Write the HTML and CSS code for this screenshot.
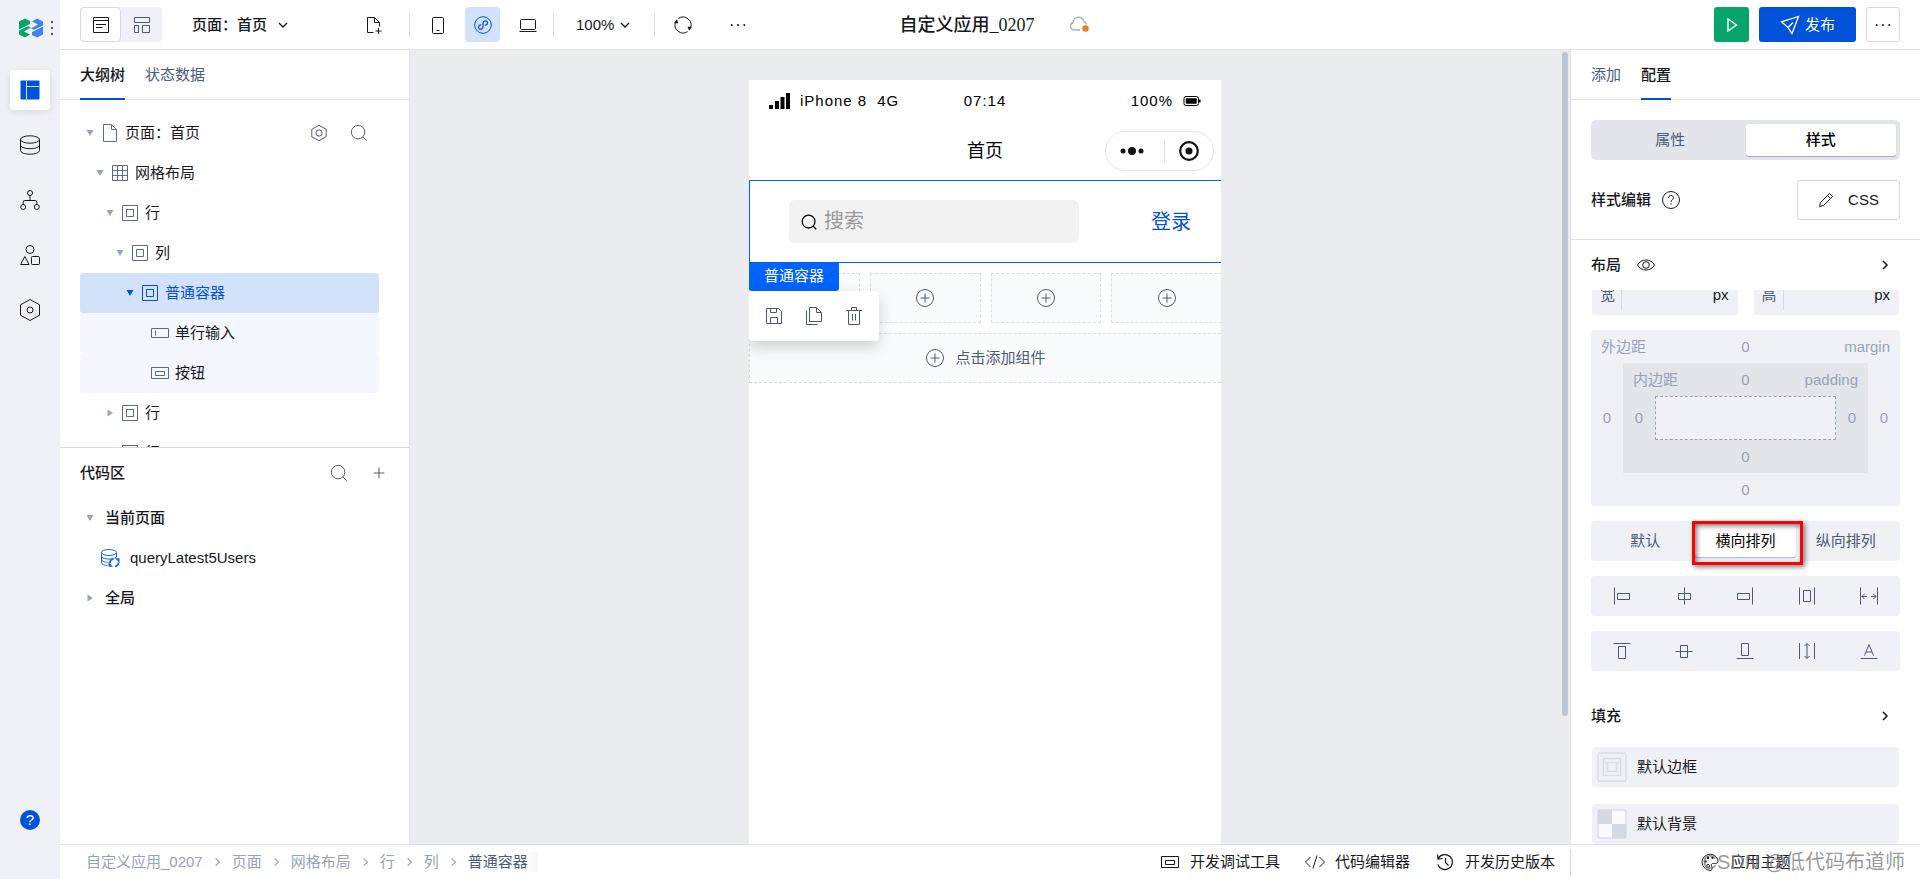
FILE: index.html
```html
<!DOCTYPE html>
<html lang="zh-CN">
<head>
<meta charset="utf-8">
<meta name="viewport" content="width=device-width, initial-scale=1">
<title>自定义应用_0207</title>
<link rel="stylesheet" href="styles.css">
</head>
<body>
<svg class="sprite" aria-hidden="true">
  <symbol id="i-caret" viewBox="0 0 8 8"><path d="M.5 1h7L4 7z" fill="currentColor" stroke="none"/></symbol>
  <symbol id="i-caret-right" viewBox="0 0 8 8"><path d="M1.500.5v7L7 4z" fill="currentColor" stroke="none"/></symbol>
  <symbol id="i-chev-down" viewBox="0 0 10 10"><path d="M1 3l4 4 4-4"/></symbol>
  <symbol id="i-chev-right" viewBox="0 0 10 10"><path d="M3 1l4 4-4 4"/></symbol>
  <symbol id="i-file" viewBox="0 0 20 20"><path d="M3.500 1.500h8l5 5v12h-13zM11.500 1.500v5h5"/></symbol>
  <symbol id="i-grid" viewBox="0 0 20 20"><path d="M2.500 2.500h15v15h-15zM7.500 2.500v15M12.500 2.500v15M2.500 7.500h15M2.500 12.500h15"/></symbol>
  <symbol id="i-box" viewBox="0 0 20 20"><path d="M2.500 2.500h15v15h-15zM6.500 6.500h7v7h-7z"/></symbol>
  <symbol id="i-input" viewBox="0 0 20 20"><path d="M1.500 5.500h17v9h-17zM5.500 7.500v5"/></symbol>
  <symbol id="i-button" viewBox="0 0 20 20"><path d="M1.500 4.500h17v11h-17zM5.500 8.500h9v4h-9z"/></symbol>
  <symbol id="i-hex" viewBox="0 0 20 20"><path d="M10 1.500l8 4.300v8.400l-8 4.300-8-4.300V5.800z"/><circle cx="10" cy="10" r="3.500"/></symbol>
  <symbol id="i-search" viewBox="0 0 20 20"><circle cx="9" cy="9" r="7.500"/><path d="M14.500 14.500l4.200 4.200"/></symbol>
  <symbol id="i-plus" viewBox="0 0 20 20"><path d="M10 4v12M4 10h12"/></symbol>
  <symbol id="i-plus-circle" viewBox="0 0 20 20"><circle cx="10" cy="10" r="8.500"/><path d="M10 5.500v9M5.500 10h9"/></symbol>
  <symbol id="i-dots" viewBox="0 0 20 20"><g fill="currentColor" stroke="none"><circle cx="3" cy="10" r="1.100"/><circle cx="10" cy="10" r="1.100"/><circle cx="17" cy="10" r="1.100"/></g></symbol>
</svg>

<div class="app">
  <nav class="rail" aria-label="主导航">
    <div class="brand">
      <svg class="logo" viewBox="0 0 24 20" aria-hidden="true">
        <path d="M0 3.500L6 .5l5 2.500v3L0 11.500zM0 12.500L9 8.300l3 1.200-7 4 6 3L6 19.500 0 16.500z" fill="#07a56c"/>
        <path d="M24 16.500L18 19.500l-5-2.500v-3L24 8.500zM24 7.500L15 11.700l-3-1.200 7-4-6-3L18 .5l6 3z" fill="#3f83f2"/>
      </svg>
      <svg class="brand-dots" viewBox="0 0 4 16" aria-hidden="true"><circle cx="2" cy="2" r="1.200"/><circle cx="2" cy="8" r="1.200"/><circle cx="2" cy="14" r="1.200"/></svg>
    </div>
    <button class="rail-btn active" aria-label="页面设计"><svg class="ic20" viewBox="0 0 20 20" aria-hidden="true"><g fill="#0052d9" stroke="none"><rect x=".5" y=".5" width="19" height="19" rx="1"/></g><path d="M6.500.5v19M6.500 6.500h13" stroke="#cfe0fb"/></svg></button>
    <button class="rail-btn" aria-label="数据源"><svg class="ic20" viewBox="0 0 20 20" aria-hidden="true"><ellipse cx="10" cy="4.500" rx="9.500" ry="3.700"/><path d="M.5 4.500v11c0 2 4.200 3.700 9.500 3.700s9.500-1.700 9.500-3.700v-11M.5 10c0 2 4.200 3.700 9.500 3.700s9.500-1.700 9.500-3.700"/></svg></button>
    <button class="rail-btn" aria-label="流程"><svg class="ic20" viewBox="0 0 20 20" aria-hidden="true"><circle cx="10" cy="3" r="2.500"/><circle cx="3.200" cy="17" r="2.500"/><circle cx="16.800" cy="17" r="2.500"/><path d="M10 5.500v5M3.200 14.500v-2.500q0-1.500 1.500-1.500h10.600q1.500 0 1.500 1.500v2.500"/></svg></button>
    <button class="rail-btn" aria-label="组件"><svg class="ic20" viewBox="0 0 20 20" aria-hidden="true"><circle cx="10" cy="4.500" r="4"/><path d="M4.800 11.500l4.200 8H.6z" stroke-linejoin="round"/><rect x="11.500" y="11.500" width="8" height="8" rx="1"/></svg></button>
    <button class="rail-btn" aria-label="设置"><svg class="ic22" viewBox="0 0 22 22" aria-hidden="true"><path d="M11 .5l9.500 5.300v10.400L11 21.500 1.500 16.200V5.800z"/><circle cx="11" cy="11" r="3"/></svg></button>
    <button class="rail-btn help" aria-label="帮助"><span class="help-dot">?</span></button>
  </nav>

  <div class="work">
    <header class="topbar">
      <div class="top-left">
        <div class="toggle">
          <button class="on" aria-label="大纲视图"><svg class="ic18" viewBox="0 0 18 18" aria-hidden="true"><path d="M1.500 1.500h15v15h-15zM1.500 4.500h15M4 8.500h10M4 11.500h6.500"/></svg></button>
          <button aria-label="布局视图"><svg class="ic18" viewBox="0 0 18 18" aria-hidden="true"><path d="M1.500 1.500h15v5h-15zM1.500 9.500h4v7h-4zM9.500 9.500h7v7h-7z"/></svg></button>
        </div>
        <label class="pick page-pick"><select aria-label="当前页面"><option>页面：首页</option></select><svg class="ic10" aria-hidden="true"><use href="#i-chev-down"/></svg></label>
        <button class="tool new-page" aria-label="新建页面"><svg class="ic18" viewBox="0 0 18 18" aria-hidden="true"><path d="M8.500 16.500h-6v-15h7l5 5v4M9.500 1.500v5h5M13.500 12v6M10.500 15h6"/></svg></button>
        <span class="divider"></span>
        <div class="devices">
          <button class="tool" aria-label="手机"><svg class="ic18" viewBox="0 0 18 18" aria-hidden="true"><rect x="3.500" y="1.500" width="11" height="16" rx="1"/><path d="M7.500 14.500h3"/></svg></button>
          <button class="tool active" aria-label="小程序"><svg class="ic18" viewBox="0 0 18 18" aria-hidden="true"><circle cx="9" cy="9" r="8.300"/><path d="M7.200 8.800C3.600 9 4 13.200 6.500 13.200 8.200 13.200 9 12 9 10.700V7.300C9 6 9.800 4.800 11.500 4.800c2.500 0 2.900 4.200-.7 4.400" stroke-width="1.200"/></svg></button>
          <button class="tool" aria-label="电脑"><svg class="ic18" viewBox="0 0 18 18" aria-hidden="true"><rect x="1.500" y="3.500" width="15" height="10" rx="1"/><path d="M.5 15.500h17"/></svg></button>
        </div>
        <span class="divider tight"></span>
        <label class="pick zoom-pick"><select aria-label="缩放"><option>100%</option></select><svg class="ic10" aria-hidden="true"><use href="#i-chev-down"/></svg></label>
        <span class="divider"></span>
        <div class="actions">
          <button class="tool" aria-label="刷新"><svg class="ic20" viewBox="0 0 20 20" aria-hidden="true"><path d="M5.500 3.400a8 8 0 0 1 11.900 9.600M14.500 16.600a8 8 0 0 1-11.900-9.600"/><path d="M1 8.300l2.800-4 1.700 4zM19 11.700l-2.800 4-1.700-4z" fill="currentColor" stroke="none"/></svg></button>
          <button class="tool" aria-label="更多"><svg class="ic18" aria-hidden="true"><use href="#i-dots"/></svg></button>
        </div>
      </div>
      <div class="app-title">
        <h1>自定义应用_0207</h1>
        <svg class="ic20" viewBox="0 0 20 20" aria-label="未保存"><path d="M11 15H4.500a4 4 0 0 1-.6-7.500 5.600 5.600 0 0 1 11-1 4.300 4.300 0 0 1 2.600 3" stroke="#a3afc4" stroke-width="1.400"/><circle cx="16.500" cy="13.500" r="3.200" fill="#ed7b2f" stroke="none"/></svg>
      </div>
      <div class="top-right">
        <button class="run" aria-label="预览"><svg class="ic18" viewBox="0 0 18 18" aria-hidden="true"><path d="M5 3l8.500 6L5 15z" stroke-width="1.400"/></svg></button>
        <button class="publish"><svg class="ic20" viewBox="0 0 20 20" aria-hidden="true"><path d="M18.500 1.500L12 18.500l-4-6-6.500-5.700zM8 12.500l5-5" stroke-width="1.300"/></svg>发布</button>
        <button class="more" aria-label="更多操作"><svg class="ic18" aria-hidden="true"><use href="#i-dots"/></svg></button>
      </div>
    </header>

    <div class="middle">
      <aside class="left">
        <div class="tabs"><button class="tab on">大纲树</button><button class="tab">状态数据</button></div>
        <div class="tree">
          <div class="row d0"><svg class="caret"><use href="#i-caret"/></svg><svg class="ic20"><use href="#i-file"/></svg><span>页面：首页</span>
            <div class="row-tools"><button class="tool" aria-label="页面设置"><svg class="ic18"><use href="#i-hex"/></svg></button><button class="tool" aria-label="搜索"><svg class="ic18"><use href="#i-search"/></svg></button></div></div>
          <div class="row d1"><svg class="caret"><use href="#i-caret"/></svg><svg class="ic20"><use href="#i-grid"/></svg><span>网格布局</span></div>
          <div class="row d2"><svg class="caret"><use href="#i-caret"/></svg><svg class="ic20"><use href="#i-box"/></svg><span>行</span></div>
          <div class="row d3"><svg class="caret"><use href="#i-caret"/></svg><svg class="ic20"><use href="#i-box"/></svg><span>列</span></div>
          <div class="row d4 selected"><svg class="caret"><use href="#i-caret"/></svg><svg class="ic20"><use href="#i-box"/></svg><span>普通容器</span></div>
          <div class="row d5 inside"><i class="caret"></i><svg class="ic20"><use href="#i-input"/></svg><span>单行输入</span></div>
          <div class="row d5 inside"><i class="caret"></i><svg class="ic20"><use href="#i-button"/></svg><span>按钮</span></div>
          <div class="row d2"><svg class="caret"><use href="#i-caret-right"/></svg><svg class="ic20"><use href="#i-box"/></svg><span>行</span></div>
          <div class="row d2"><svg class="caret"><use href="#i-caret-right"/></svg><svg class="ic20"><use href="#i-box"/></svg><span>行</span></div>
        </div>
        <section class="code">
          <div class="code-head"><h2>代码区</h2><div class="row-tools"><button class="tool" aria-label="搜索代码"><svg class="ic18"><use href="#i-search"/></svg></button><button class="tool" aria-label="新建"><svg class="ic18"><use href="#i-plus"/></svg></button></div></div>
          <div class="row d0 group"><svg class="caret"><use href="#i-caret"/></svg><span>当前页面</span></div>
          <div class="row d0 query"><svg class="ic20" viewBox="0 0 20 20"><ellipse cx="9" cy="4.500" rx="7.500" ry="3"/><path d="M1.500 4.500v10c0 1.600 2.500 2.800 6 3M16.500 4.500v5M1.500 8c0 1.600 3.300 3 7.500 3s7.500-1.400 7.500-3M1.500 11.500c0 1.600 3 2.700 6 2.900"/><path d="M10 15a3.800 3.800 0 0 1 3.500-3.800M18.500 14.500a3.800 3.800 0 0 1-3.500 3.800" stroke-width="1.800"/><path d="M8.500 18.800V14l4.500 4.800zM19.500 10.200V15L15 10.200z" fill="currentColor" stroke="none"/></svg><span>queryLatest5Users</span></div>
          <div class="row d0 group"><svg class="caret"><use href="#i-caret-right"/></svg><span>全局</span></div>
        </section>
      </aside>

      <main class="canvas">
        <div class="stage">
          <div class="phone">
            <div class="status">
              <div class="carrier"><svg class="signal" viewBox="0 0 21 16"><path d="M0 12h4v4H0zM6 8h4v8H6zM11.500 4h4v12h-4zM17 0h4v16h-4z"/></svg><span>iPhone 8</span><span>4G</span></div>
              <span>07:14</span>
              <div class="battery"><span>100%</span><svg class="ic18" viewBox="0 0 18 18"><rect x="1" y="4.500" width="14.500" height="9" rx="2" stroke="#000"/><rect x="2.800" y="6.300" width="11" height="5.500" rx="1" fill="#000" stroke="none"/><path d="M16.800 7.500v3" stroke="#000" stroke-width="1.500"/></svg></div>
            </div>
            <div class="navbar">
              <span class="nav-title">首页</span>
              <div class="capsule">
                <svg class="cap-dots" viewBox="0 0 24 10"><circle cx="3" cy="5" r="2.500"/><circle cx="12" cy="5" r="4"/><circle cx="21" cy="5" r="2.500"/></svg>
                <i></i>
                <svg class="ic20" viewBox="0 0 20 20"><circle cx="10" cy="10" r="8.800" stroke="#111" stroke-width="2.200"/><circle cx="10" cy="10" r="3.500" fill="#111" stroke="none"/></svg>
              </div>
            </div>
            <div class="picked">
              <label class="search"><svg class="ic16" viewBox="0 0 20 20"><circle cx="9.500" cy="9.500" r="8" stroke-width="1.600"/><path d="M15 15l4 4" stroke-width="1.600"/></svg><input type="text" placeholder="搜索" aria-label="搜索"></label>
              <button class="login">登录</button>
              <div class="pick-tools">
                <span class="pick-name">普通容器</span>
                <div class="pick-menu">
                  <button aria-label="保存"><svg class="ic18" viewBox="0 0 18 18"><path d="M1.500 1.500h12l3 3v12h-15zM5.500 1.500v4h6v-4M5.500 16.500v-6h7v6"/></svg></button>
                  <button aria-label="复制"><svg class="ic18" viewBox="0 0 18 18"><path d="M4.500.5h7l5 5v9h-12zM11.500.5v5h5M1.500 3.500v14h11"/></svg></button>
                  <button aria-label="删除"><svg class="ic18" viewBox="0 0 18 18"><path d="M1 3.500h16M6.500 3.500v-3h5v3M3.500 3.500v14h11v-14M7.500 7v6.500M10.500 7v6.500"/></svg></button>
                </div>
              </div>
            </div>
            <div class="cells">
              <div class="slot"><svg class="ic20"><use href="#i-plus-circle"/></svg></div>
              <div class="slot"><svg class="ic20"><use href="#i-plus-circle"/></svg></div>
              <div class="slot"><svg class="ic20"><use href="#i-plus-circle"/></svg></div>
              <div class="slot"><svg class="ic20"><use href="#i-plus-circle"/></svg></div>
            </div>
            <div class="slot wide"><svg class="ic20"><use href="#i-plus-circle"/></svg><span>点击添加组件</span></div>
          </div>
        </div>
        <div class="scrollbar"><i></i></div>
      </main>

      <aside class="right">
        <div class="tabs"><button class="tab">添加</button><button class="tab on">配置</button></div>
        <div class="style-top">
          <div class="segment main-seg"><button>属性</button><button class="on">样式</button></div>
          <div class="style-edit"><h2>样式编辑</h2><svg class="ic20" viewBox="0 0 20 20" aria-label="帮助"><circle cx="10" cy="10" r="8.500"/><path d="M7.500 8c0-3.400 5-3.200 5-.3 0 2-2.500 2-2.500 4.300M10 13.300v1.400"/></svg>
            <button class="css-btn"><svg class="ic16" viewBox="0 0 16 16" aria-hidden="true"><path d="M1.500 14.500l1-4 9-9 3 3-9 9zM9.500 3.500l3 3"/></svg>CSS</button></div>
        </div>
        <div class="section-head"><h2>布局</h2><svg class="ic20" viewBox="0 0 20 20" aria-label="显示"><path d="M1.500 10c3.500-6.700 13.500-6.700 17 0-3.500 6.700-13.500 6.700-17 0z"/><circle cx="10" cy="10" r="3.300"/></svg><svg class="ic10 go"><use href="#i-chev-right"/></svg></div>
        <div class="props">
          <div class="size-row">
            <label class="size"><span>宽</span><input type="text" aria-label="宽"><em>px</em></label>
            <label class="size"><span>高</span><input type="text" aria-label="高"><em>px</em></label>
          </div>
          <div class="margin-box">
            <div class="edge"><span>外边距</span><b>0</b><span>margin</span></div>
            <div class="mid"><b>0</b>
              <div class="padding-box">
                <div class="edge"><span>内边距</span><b>0</b><span>padding</span></div>
                <div class="mid"><b>0</b><div class="content-box"></div><b>0</b></div>
                <div class="edge single"><b>0</b></div>
              </div>
            <b>0</b></div>
            <div class="edge single"><b>0</b></div>
          </div>
          <div class="segment flow"><button>默认</button><button class="on">横向排列</button><button>纵向排列</button><i class="mark"></i></div>
          <div class="icons">
            <button aria-label="左对齐"><svg class="ic18" viewBox="0 0 18 18"><path d="M1.500.5v17M4.500 6.500h12v6h-12z"/></svg></button>
            <button aria-label="水平居中"><svg class="ic18" viewBox="0 0 18 18"><path d="M9.500.5v17M3.500 6.500h12v6h-12z"/></svg></button>
            <button aria-label="右对齐"><svg class="ic18" viewBox="0 0 18 18"><path d="M16.500.5v17M1.500 6.500h12v6h-12z"/></svg></button>
            <button aria-label="环绕分布"><svg class="ic18" viewBox="0 0 18 18"><path d="M1.500.5v17M16.500.5v17M5.500 3.500h7v11h-7z"/></svg></button>
            <button aria-label="两端对齐"><svg class="ic18" viewBox="0 0 18 18"><path d="M.5.5v17M17.500.5v17M2 9.500h5M4.500 7L2 9.500 4.500 12M16 9.500h-5M13.500 7L16 9.500 13.500 12"/></svg></button>
          </div>
          <div class="icons">
            <button aria-label="顶部对齐"><svg class="ic18" viewBox="0 0 18 18"><path d="M.5 1.500h17M5.500 4.500h7v12h-7z"/></svg></button>
            <button aria-label="垂直居中"><svg class="ic18" viewBox="0 0 18 18"><path d="M.5 9.500h17M5.500 3.500h7v12h-7z"/></svg></button>
            <button aria-label="底部对齐"><svg class="ic18" viewBox="0 0 18 18"><path d="M.5 16.500h17M5.500 1.500h7v12h-7z"/></svg></button>
            <button aria-label="拉伸"><svg class="ic18" viewBox="0 0 18 18"><path d="M1.500 1v16M16.500 1v16M9 1.500v15M6.500 4L9 1.500 11.500 4M6.500 14L9 16.500 11.500 14"/></svg></button>
            <button aria-label="基线对齐"><svg class="ic18" viewBox="0 0 18 18"><path d="M.5 16.500h17M4.500 13.500L9 2.500l4.500 11M6 10h6"/></svg></button>
          </div>
          <div class="section-head fill"><h2>填充</h2><svg class="ic10 go"><use href="#i-chev-right"/></svg></div>
          <div class="presets">
            <button class="preset"><svg class="thumb" viewBox="0 0 30 30"><rect x="1" y="1" width="28" height="28" rx="2"/><path d="M6.500 6.500h17v17h-17zM10.500 10.500h9v9h-9z"/></svg>默认边框</button>
            <button class="preset"><svg class="thumb" viewBox="0 0 30 30"><rect x="1" y="1" width="28" height="28" rx="2" fill="#f8fafd"/><path d="M1 1h14v14H1zM15 15h14v14H15z" fill="#d5d9e2" stroke="none"/></svg>默认背景</button>
          </div>
        </div>
      </aside>
    </div>

    <footer class="footbar">
      <nav class="crumbs" aria-label="路径">
        <a href="#">自定义应用_0207</a><svg class="ic10"><use href="#i-chev-right"/></svg><a href="#">页面</a><svg class="ic10"><use href="#i-chev-right"/></svg><a href="#">网格布局</a><svg class="ic10"><use href="#i-chev-right"/></svg><a href="#">行</a><svg class="ic10"><use href="#i-chev-right"/></svg><a href="#">列</a><svg class="ic10"><use href="#i-chev-right"/></svg><a href="#" class="here">普通容器</a>
      </nav>
      <div class="dev-tools">
        <button><svg class="ic20"><use href="#i-button"/></svg>开发调试工具</button>
        <button><svg class="ic20" viewBox="0 0 20 20"><path d="M5.500 5l-5 5 5 5M14.500 5l5 5-5 5M12 3.500L8 16.500"/></svg>代码编辑器</button>
        <button><svg class="ic20" viewBox="0 0 20 20"><path d="M3.300 6.500a7.500 7.500 0 1 1-.5 6M2.500 2.500l.5 4.500 4.500-.5M10.500 6v4.500l3 3" stroke-width="1.200"/></svg>开发历史版本</button>
      </div>
      <div class="theme">
        <button><svg class="ic20" viewBox="0 0 20 20"><path d="M10 18.500C3 17 .5 11 3 6.500 6.500.5 15 1 17.500 7c1.200 3.500-.5 5-3 4.500-3-.5-4 1-2.500 3.500 1 2-.5 3.700-2 3.500z"/><g fill="currentColor" stroke="none"><circle cx="5.500" cy="9.500" r="1.200"/><circle cx="8" cy="5.800" r="1.200"/><circle cx="12.500" cy="5.800" r="1.200"/></g><circle cx="8" cy="14" r="1.500"/></svg>应用主题</button>
        <span class="credit">CSDN @低代码布道师</span>
      </div>
    </footer>
  </div>
</div>
</body>
</html>
```
FILE: styles.css
```css
:root {
  --ink: #16181d;
  --slate: #4b5b76;
  --mute: #97a3b7;
  --line: #e1e3e8;
  --soft: #f0f1f6;
  --blue: #0052d9;
}
* { box-sizing: border-box; }
body {
  margin: 0;
  color: var(--ink);
  background: #fff;
  font: 15px/20px "Liberation Sans", "Noto Sans CJK SC", sans-serif;
}
button, input, select { font: inherit; color: inherit; margin: 0; padding: 0; border: 0; background: none; }
button { display: flex; align-items: center; justify-content: center; cursor: pointer; white-space: nowrap; }
h1, h2 { margin: 0; font-size: 15px; font-weight: 500; }
a { color: inherit; text-decoration: none; }
svg { flex: none; fill: none; stroke: currentColor; }
.sprite { position: absolute; width: 0; height: 0; }
.ic10 { width: 10px; height: 10px; stroke-width: 1.300; }
.ic16 { width: 16px; height: 16px; }
.ic18 { width: 18px; height: 18px; }
.ic20 { width: 20px; height: 20px; }
.ic22 { width: 22px; height: 22px; }

.app { display: flex; height: 100vh; overflow: hidden; }
.work { flex: 1; min-width: 0; display: flex; flex-direction: column; }

/* Rail */
.rail { flex: 0 0 60px; display: flex; flex-direction: column; align-items: center; gap: 15px; padding-bottom: 39px; background: var(--soft); }
.brand { display: flex; align-items: center; gap: 7px; height: 55px; padding-left: 12px; }
.logo { width: 24px; height: 20px; stroke: none; }
.brand-dots { width: 4px; height: 16px; fill: var(--slate); stroke: none; }
.rail-btn { width: 40px; height: 40px; border-radius: 4px; }
.rail-btn.active { background: #fff; box-shadow: 0 2px 6px rgba(30, 50, 90, .12); }
.rail-btn.help { margin-top: auto; }
.help-dot { width: 20px; border-radius: 50%; background: var(--blue); color: #fff; text-align: center; }

/* Top bar */
.topbar { flex: 0 0 50px; display: grid; grid-template-columns: 1fr auto 1fr; align-items: center; padding: 0 20px; border-bottom: 1px solid var(--line); }
.top-left, .devices, .actions, .top-right { display: flex; align-items: center; }
.toggle { display: flex; height: 35px; border-radius: 4px; background: var(--soft); color: var(--slate); }
.toggle button { width: 41px; height: 35px; border-radius: 4px; }
.toggle .on { border: 1px solid #d5d9e2; background: #fff; color: var(--ink); }
.pick { display: flex; align-items: center; gap: 10px; }
.pick select { appearance: none; }
.page-pick { margin-left: 30px; font-weight: 500; }
.tool { width: 35px; height: 35px; border-radius: 4px; }
.tool.active { background: #d3e2fb; color: var(--blue); }
.new-page { margin-left: 68px; }
.divider { width: 1px; height: 24px; margin: 0 10px 0 18px; background: var(--line); }
.divider.tight { margin: 0 22px 0 8px; }
.devices { gap: 10px; }
.zoom-pick { gap: 5px; margin-right: 6px; }
.actions { gap: 20px; }
.app-title { display: flex; align-items: center; gap: 34px; padding-left: 8px; }
.app-title h1 { font: 500 18px/24px "Liberation Serif", "Noto Sans CJK SC", serif; }
.top-right { justify-content: flex-end; gap: 10px; }
.top-right button { height: 35px; border-radius: 3px; }
.run { width: 35px; background: #07a56c; color: #fff; }
.publish { width: 97px; gap: 5px; background: var(--blue); color: #fff; }
.top-right .more { width: 34px; border: 1px solid #d5d9e2; }

.middle { flex: 1; min-height: 0; display: flex; }
.tabs { flex: 0 0 50px; display: flex; gap: 20px; padding: 0 20px; border-bottom: 1px solid var(--line); }
.tab { height: 50px; margin-bottom: -1px; border-top: 2px solid transparent; border-bottom: 2px solid transparent; color: var(--slate); }
.tab.on { border-bottom-color: var(--blue); color: var(--ink); font-weight: 500; }

/* Outline and code */
.left { flex: 0 0 350px; min-width: 0; display: flex; flex-direction: column; border-right: 1px solid var(--line); }
.tree { flex: 7 1 0; min-height: 0; overflow: hidden; padding: 0 30px 0 20px; border-bottom: 1px solid #d5d9e2; }
.tree .row:first-child { margin-top: 13px; }
.row { display: flex; align-items: center; height: 40px; border-radius: 3px; }
.row > svg:not(.caret) { color: #5c6b87; }
.row > span { margin-left: 5px; }
.caret { width: 20px; height: 8px; color: var(--mute); }
.d1 { padding-left: 10px; }
.d2 { padding-left: 20px; }
.d3 { padding-left: 30px; }
.d4 { padding-left: 40px; }
.d5 { padding-left: 50px; }
.row.selected, .row.selected > svg:not(.caret), .row.selected > .caret { color: var(--blue); }
.row.selected { background: #d3e2fb; }
.row.inside { background: #f4f7fe; }
.row-tools { display: flex; gap: 5px; margin-left: auto; color: #444b57; }
.tree .row-tools { padding-right: 3px; }
.code { flex: 8 1 0; min-height: 0; overflow: hidden; padding: 0 13px 0 20px; }
.code-head { display: flex; align-items: center; height: 50px; }
.group { font-weight: 500; }
.row.query { padding-left: 20px; }
.row.query > svg { color: #1766e8; }
.row.query > span { margin-left: 10px; }

/* Canvas */
.canvas { flex: 1; min-width: 0; display: flex; background: #ebecf0; }
.stage { flex: 1; min-width: 0; display: flex; justify-content: center; padding-top: 30px; }
.phone { width: 472px; overflow: hidden; background: #fff; color: #000; }
.scrollbar { flex: 0 0 10px; padding: 2px 0; }
.scrollbar i { display: block; width: 6px; height: 84%; margin-left: 2px; border-radius: 3px; background: #bcc5d1; }
.status { display: grid; grid-template-columns: 1fr auto 1fr; align-items: center; height: 42px; padding: 0 20px; letter-spacing: 1px; }
.carrier, .battery { display: flex; align-items: center; gap: 10px; }
.battery { justify-content: flex-end; }
.signal { width: 21px; height: 16px; fill: #000; stroke: none; }
.navbar { display: grid; grid-template-columns: 1fr auto 1fr; align-items: center; height: 58px; padding: 0 7px; }
.nav-title { grid-column: 2; font-size: 18px; line-height: 24px; }
.capsule { justify-self: end; display: flex; align-items: center; justify-content: space-between; width: 109px; height: 40px; padding: 0 14px; border: 1px solid #e4e6ec; border-radius: 20px; }
.capsule i { width: 1px; height: 23px; background: var(--line); margin-left: 5px; }
.cap-dots { width: 24px; height: 10px; fill: #111; stroke: none; }
.picked { position: relative; display: flex; align-items: center; justify-content: space-between; height: 83px; padding: 0 30px 0 39px; border: 1px solid #0062ff; border-right: 0; }
.search { display: flex; align-items: center; gap: 7px; width: 290px; height: 43px; padding: 0 12px; border-radius: 6px; background: #f2f2f2; font-size: 20px; }
.search input { flex: 1; min-width: 0; height: 30px; outline: 0; }
.search input::placeholder { color: #999; opacity: 1; }
.login { font-size: 20px; line-height: 28px; color: var(--blue); }
.pick-tools { position: absolute; z-index: 2; top: 100%; left: -1px; }
.pick-name { display: block; width: 90px; padding: 4px 0 5px; border-radius: 0 0 3px 3px; background: #0062ff; color: #fff; text-align: center; }
.pick-menu { display: flex; align-items: center; height: 50px; padding: 0 5px; border-radius: 3px; background: #fff; color: var(--slate); box-shadow: 0 6px 16px rgba(0, 0, 0, .18); }
.pick-menu button { width: 40px; height: 40px; }
.cells { display: grid; grid-template-columns: repeat(4, 1fr); gap: 10px; margin: 10px -1px 10px 0; }
.slot { display: flex; align-items: center; justify-content: center; gap: 10px; height: 50px; border: 1px dashed #d9dce2; background: #fafbfd; color: var(--slate); }
.slot.wide { border-right: 0; }

/* Config panel */
.right { flex: 0 0 350px; min-width: 0; display: flex; flex-direction: column; border-left: 1px solid var(--line); }
.style-top { display: flex; flex-direction: column; gap: 20px; padding: 20px 20px 19px; border-bottom: 1px solid var(--line); }
.segment { position: relative; display: grid; grid-auto-flow: column; grid-auto-columns: 1fr; height: 40px; border-radius: 4px; color: var(--slate); }
.segment .on { border-radius: 3px; background: #fff; color: #000; box-shadow: 0 1px 1px rgba(75, 91, 118, .4); }
.main-seg { padding: 4px; border-radius: 5px; background: #e2e5ea; }
.main-seg .on { font-weight: 500; }
.style-edit, .section-head { display: flex; align-items: center; gap: 10px; }
.css-btn { width: 103px; height: 40px; gap: 14px; margin-left: auto; border: 1px solid #d5d9e2; border-radius: 3px; }
.section-head { flex: none; height: 50px; gap: 15px; padding: 0 30px 0 20px; }
.go { margin-left: auto; stroke-width: 1.500; }
.props { flex: 1; min-height: 0; overflow: hidden; display: flex; flex-direction: column; gap: 15px; padding: 0 20px; }
.props > * { flex: none; }
.size-row { display: flex; gap: 16px; margin-top: -15px; padding: 0 1px; }
.size { flex: 1; min-width: 0; display: flex; align-items: center; height: 40px; padding: 0 9px 0 8px; border-radius: 3px; background: var(--soft); }
.size span { padding-right: 6px; border-right: 1px solid #d5d9e2; line-height: 30px; color: var(--slate); }
.size input { flex: 1; width: 0; min-width: 0; }
.size em { font-style: normal; }
.margin-box { border-radius: 3px; background: var(--soft); color: var(--mute); }
.margin-box b { flex: none; width: 32px; font-weight: 400; text-align: center; }
.edge { display: grid; grid-template-columns: 1fr auto 1fr; align-items: center; height: 33px; padding: 0 10px; }
.edge span:last-child { text-align: right; }
.edge.single { grid-template-columns: 1fr; justify-items: center; }
.mid { display: flex; align-items: center; }
.padding-box { flex: 1; background: #e2e5ea; }
.content-box { flex: 1; height: 44px; border: 1px dashed var(--mute); background: var(--soft); }
.flow, .icons { background: var(--soft); }
.flow { padding: 4px; }
.mark { position: absolute; inset: 0 97px -4px 101px; border: 3px solid #f00; box-shadow: 2px 2px 5px rgba(0, 0, 0, .5), inset 2px 2px 5px rgba(0, 0, 0, .5); }
.icons { display: grid; grid-template-columns: repeat(5, 1fr); height: 40px; border-radius: 4px; color: var(--slate); }
.section-head.fill { margin: 5px -20px -9px; }
.presets { display: flex; flex-direction: column; gap: 17px; padding: 0 1px; }
.preset { justify-content: flex-start; gap: 10px; height: 40px; padding: 0 5px; border-radius: 3px; background: var(--soft); }
.thumb { width: 30px; height: 30px; stroke: #d9dde5; stroke-width: 1.500; }

/* Footer */
.footbar { flex: 0 0 35px; display: flex; align-items: center; border-top: 1px solid var(--line); }
.crumbs { display: flex; align-items: center; gap: 10px; padding-left: 26px; color: var(--mute); }
.crumbs .ic10 { width: 9px; }
.crumbs .here { padding-right: 10px; background: linear-gradient(90deg, #fff 80%, #f5f6f9); color: var(--slate); }
.dev-tools { display: flex; gap: 25px; height: 26px; margin-left: auto; padding-right: 15px; border-right: 1px solid #d5d9e2; }
.footbar button { gap: 10px; }
.theme { position: relative; flex: 0 0 349px; display: flex; justify-content: center; }
.credit { position: absolute; right: 15px; top: -2px; color: rgba(120, 120, 120, .75); font-size: 20px; line-height: 24px; white-space: nowrap; }
```
